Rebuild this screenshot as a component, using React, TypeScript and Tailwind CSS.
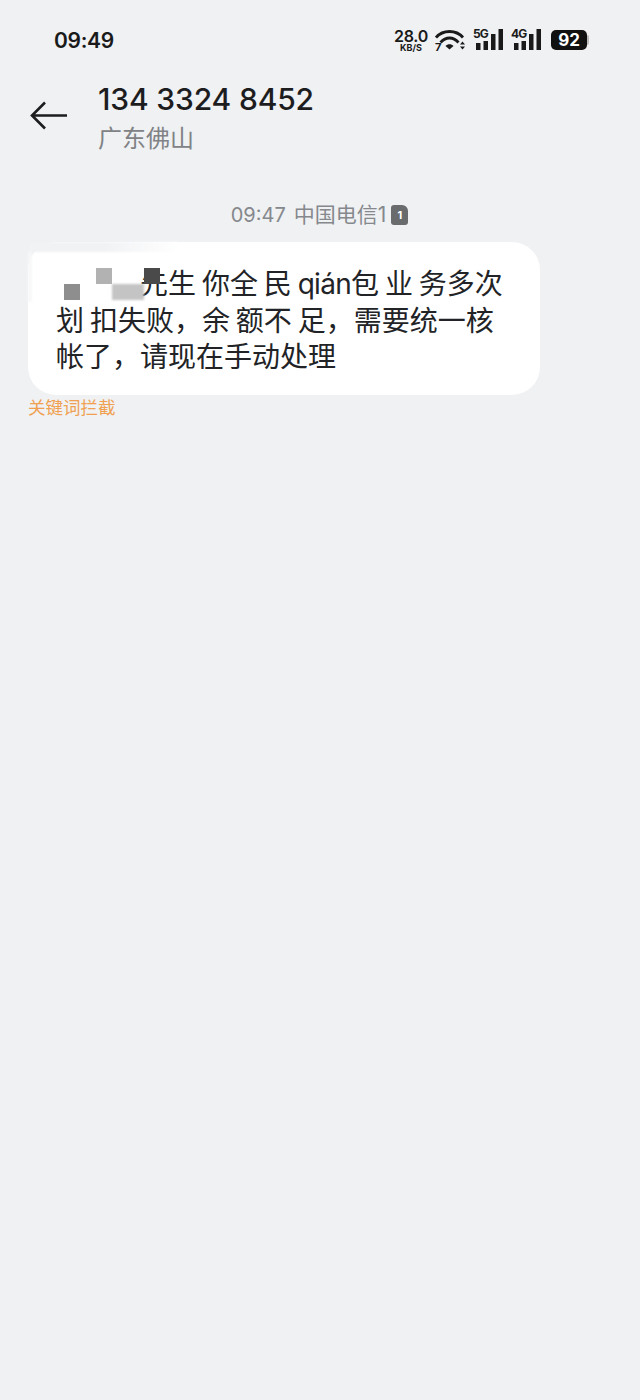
import React from "react";

const font = { fontFamily: '"Inter","Noto Sans CJK SC",sans-serif' };

function Signal({ label }: { label: string }) {
  return (
    <div className="relative w-[30px] h-[24px]">
      <span className="absolute left-0 top-[0px] text-[12px] leading-[12px] font-bold text-[#1a1a1a] tracking-[-0.9px]">{label}</span>
      <svg width="30" height="24" viewBox="0 0 30 24" className="absolute left-0 top-0">
        <rect x="3" y="15" width="4.500" height="7" fill="#1a1a1a" />
        <rect x="10.500" y="13" width="4.500" height="9" fill="#1a1a1a" />
        <rect x="18" y="6" width="4.500" height="16" fill="#1a1a1a" />
        <rect x="25.500" y="1" width="4.500" height="21" fill="#1a1a1a" />
      </svg>
    </div>
  );
}

function Wifi() {
  return (
    <div className="relative w-[32px] h-[24px]">
      <svg width="32" height="24" viewBox="0 0 32 24" fill="none">
        <path d="M1 9.500C8 1.500 21 1.500 28 9.500" stroke="#1a1a1a" strokeWidth="2.800" />
        <path d="M5.500 14.500C11 8.500 18 8.500 23.500 14.500" stroke="#1a1a1a" strokeWidth="2.800" />
        <path d="M10.500 18C12.500 15.500 16.500 15.500 18.500 18L14.500 21.500Z" fill="#1a1a1a" />
        <path d="M25 16.500L27.500 13.500L30 16.500ZM25 18.500L27.500 21.500L30 18.500Z" fill="#1a1a1a" />
      </svg>
      <span className="absolute left-0 bottom-[0px] text-[11px] leading-[10px] font-bold text-[#1a1a1a]">7</span>
    </div>
  );
}

export default function App() {
  return (
    <div className="w-[640px] h-[1400px] bg-[#eff1f3] overflow-hidden" style={font}>
      <div className="flex items-center justify-between h-[24px] mt-[28px] pl-[54px] pr-[51px]">
        <span className="text-[21px] leading-[24px] pt-[1px] font-semibold tracking-[-0.3px] text-[#1a1a1a]">09:49</span>
        <div className="flex items-center">
          <div className="flex flex-col items-center w-[36px] text-[#1a1a1a] font-semibold">
            <span className="text-[16px] leading-[14px] tracking-[-0.3px]">28.0</span>
            <span className="text-[9px] leading-[9px] font-bold">KB/S</span>
          </div>
          <div className="ml-[6px]"><Wifi /></div>
          <div className="ml-[6px]"><Signal label="5G" /></div>
          <div className="ml-[8px]"><Signal label="4G" /></div>
          <div className="ml-[10px] flex items-center">
            <div className="w-[36px] h-[20px] rounded-[5px] bg-[#111] text-white text-[17px] leading-[20px] font-bold text-center">92</div>
            <div className="w-[2px] h-[10px] bg-[#bbb] rounded-r-sm" />
          </div>
        </div>
      </div>

      <div className="flex mt-[28px] pl-[30px]">
        <svg width="38" height="32" viewBox="0 0 38 32" fill="none" className="mt-[20px]">
          <path d="M37 15.500H2M15 2.500L2 15.500L15 28.500" stroke="#1d1d1f" strokeWidth="2.600" />
        </svg>
        <div className="ml-[30px]">
          <div className="text-[30px] leading-[38px] font-medium tracking-[-0.15px] text-[#1d1d1f]">134 3324 8452</div>
          <div className="text-[24px] leading-[32px] mt-[5px] text-[#808285]">广东佛山</div>
        </div>
      </div>

      <div className="flex items-center justify-center mt-[47px] pr-[1px] text-[20px] leading-[26px] text-[#85888c]">
        <span>09:47</span>
        <span className="ml-[8px] text-[21px]">中国电信1</span>
        <span className="ml-[5px] w-[17px] h-[20px] bg-[#6a6b6d] rounded-[3px] rounded-tr-[6px] text-white text-[11px] leading-[20px] font-bold text-center">1</span>
      </div>

      <div className="relative ml-[28px] mt-[14px] w-[512px] h-[153px] bg-white rounded-[28px] pl-[28px] pr-[20px] pt-[24px] text-[28px] leading-[36.500px] text-[#222326] [word-spacing:-2px]">
        <p>
          <span className="ml-[84px]">先生 你全 民 <span className="tracking-[-0.7px]">qián</span>包 业 务多次</span>
          <br />划 扣失败，余 额不 足，需要统一核
          <br />帐了，请现在手动处理
        </p>
        <div className="absolute left-0 top-0 w-[150px] h-[10px] bg-gradient-to-r from-[#f1f2f4] via-[#f1f2f4] to-white rounded-tl-[28px] blur-[1px]" />
        <div className="absolute left-0 top-[10px] w-[4px] h-[50px] bg-[#f7f8f9] blur-[1px]" />
        <div className="absolute left-[36px] top-[42px] w-[16px] h-[16px] bg-[#8e8e8e]" />
        <div className="absolute left-[68px] top-[26px] w-[16px] h-[16px] bg-[#b2b2b2]" />
        <div className="absolute left-[84px] top-[42px] w-[32px] h-[16px] bg-[#c4c4c4] blur-[1px]" />
        <div className="absolute left-[116px] top-[26px] w-[16px] h-[16px] bg-[#4a4a4a]" />
      </div>

      <div className="ml-[28px] mt-[1px] text-[17.500px] leading-[24px] text-[#f0a050]">关键词拦截</div>
    </div>
  );
}
